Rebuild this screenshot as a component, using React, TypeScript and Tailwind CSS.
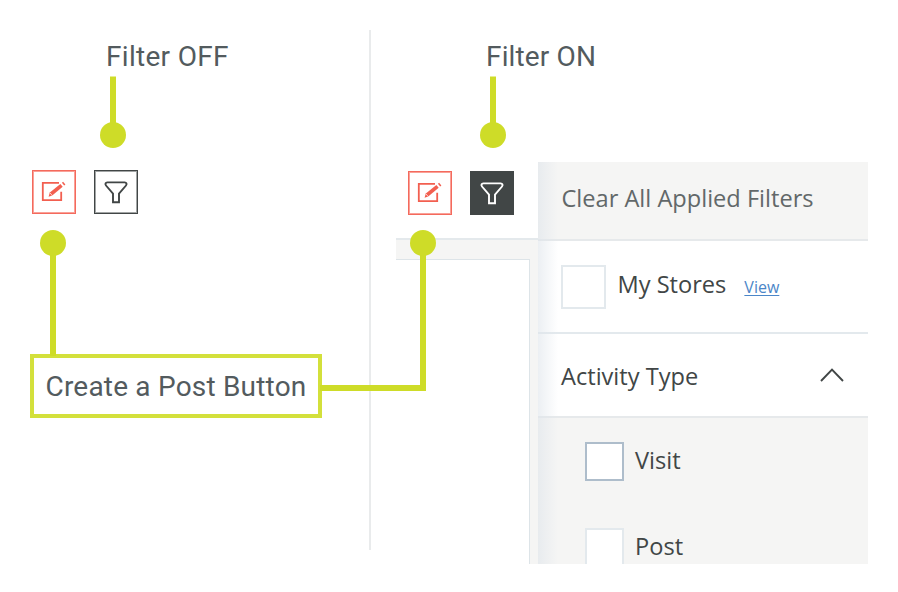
import React from 'react';

function EditButton() {
  return (
    <button className="w-11 h-11 border border-[#f46a5d] shadow-[inset_0_0_0_1px_#f9a198] bg-white flex items-center justify-center">
      <svg viewBox="0 0 44 44" className="w-11 h-11 shrink-0" fill="none">
        <path d="M27 12.8H10.8v17.4h18.4V21.8" stroke="#f25f50" strokeWidth="1.8" />
        <path d="M16.6 26.8l1.2-4.2L28.4 14l2.3 2.8-10.5 8.8z" fill="#f25f50" />
        <path d="M29.9 12.8l2.3 2.8 1.2-1-2.3-2.8z" fill="#f25f50" />
        <path d="M18.1 23l2.1 2.5" stroke="#fff" strokeWidth=".7" />
      </svg>
    </button>
  );
}

function FilterButton({ active = false }: { active?: boolean }) {
  return (
    <button
      className={
        active
          ? 'w-11 h-11 bg-[#414646] text-white flex items-center justify-center'
          : 'w-11 h-11 border border-[#414646] shadow-[inset_0_0_0_1px_#a2a5a5] bg-white text-[#414646] flex items-center justify-center'
      }
    >
      <svg viewBox="0 0 44 44" className="w-11 h-11 shrink-0" fill="none" stroke="currentColor" strokeWidth="1.9">
        <path d="M13.3 12.4h17.4c1.8 0 2.4 1.8 1.3 3.1L25 23.6v8.6h-6v-8.6L12 15.5c-1.1-1.3-.5-3.1 1.3-3.1z" />
      </svg>
    </button>
  );
}

function FilterPanel() {
  return (
    <aside className="relative w-[330px] h-full overflow-hidden bg-[#f5f5f4] font-['Open_Sans',sans-serif] text-[23.6px] text-[#414646]">
      <div className="h-[79px] pl-[23.5px] pb-1 flex items-center border-b-2 border-[#e6e9eb] text-[#626869]">
        <span className="whitespace-nowrap">Clear All Applied Filters</span>
      </div>
      <div className="h-[93px] pl-[23px] flex items-center bg-white border-b-2 border-[#e3e9ed]">
        <span className="w-[45px] h-11 border-2 border-[#e3e9ed] bg-white" />
        <span className="ml-[11.5px] -mt-1">My Stores</span>
        <a className="ml-[18px] text-base text-[#4b86c8] underline underline-offset-2">View</a>
      </div>
      <div className="h-[84px] pl-[23px] pr-6 pt-0.5 flex items-center justify-between bg-white border-b-2 border-[#e6e9eb]">
        <span className="mt-0.5">Activity Type</span>
        <svg viewBox="0 0 24 14" className="w-6 h-3.5 -mt-0.5" fill="none" stroke="#414646" strokeWidth="1.9">
          <path d="M1 13L12 1.5 23 13" />
        </svg>
      </div>
      <div className="pl-[47px] pt-6 flex flex-col gap-[47px]">
        <div className="h-[39px] flex items-center">
          <span className="w-[39px] h-[39px] border-2 border-[#aebdcb] bg-white" />
          <span className="ml-[11px] -mt-0.5">Visit</span>
        </div>
        <div className="h-[39px] flex items-center">
          <span className="w-[39px] h-[39px] border-2 border-[#e3e9ed] bg-white" />
          <span className="ml-[11px] -mt-0.5">Post</span>
        </div>
      </div>
      <div className="absolute inset-y-0 left-0 w-5 bg-gradient-to-r from-[#dfe5eb]/60 to-transparent" />
    </aside>
  );
}

// Connector lines drawn over both halves
function Callouts() {
  return (
    <svg viewBox="0 0 898 592" className="absolute inset-0 w-[898px] h-[592px] pointer-events-none" fill="#cedc28">
      <g stroke="#cedc28" strokeWidth="6" fill="none">
        <path d="M113 76.5V135" />
        <path d="M493 76.5V135" />
        <path d="M53 243V356" />
        <path d="M423 243V388H320" />
      </g>
      <circle cx="113" cy="135" r="13" />
      <circle cx="493" cy="135" r="13" />
      <circle cx="53" cy="243" r="13" />
      <circle cx="423" cy="243" r="13" />
    </svg>
  );
}

export default function App() {
  return (
    <div className="relative w-[898px] h-[592px] overflow-hidden bg-white flex font-['Roboto',sans-serif] text-[#535b5e]">
      <section className="w-[369px] pt-[41px] flex flex-col items-start">
        <h2 className="ml-[106px] h-8 leading-8 text-[28px] tracking-[0.3px] whitespace-nowrap">Filter OFF</h2>
        <div className="mt-[97px] ml-8 flex gap-[18px]">
          <EditButton />
          <FilterButton />
        </div>
        <div className="mt-[140px] ml-[30px] w-[292px] h-16 pt-0.5 border-4 border-[#d3e03b] bg-white flex items-center justify-center">
          <span className="text-[28px] tracking-[0.2px] whitespace-nowrap">Create a Post Button</span>
        </div>
      </section>

      <div className="mt-[30px] w-0.5 h-[520px] bg-[#e9ebec]" />

      <section className="w-[527px] pt-[41px]">
        <h2 className="ml-[115px] h-8 leading-8 text-[28px] tracking-[0.15px] whitespace-nowrap">Filter ON</h2>
        <div className="mt-[89px] ml-[25px] h-[402px] flex">
          <div className="w-[142px] flex flex-col">
            <div className="h-[78px] pt-[9px] pl-3 flex gap-[18px] border-b-2 border-[#e4e9ec]">
              <EditButton />
              <FilterButton active />
            </div>
            <div className="flex-1 pt-[19px] pr-2 bg-[#f5f5f4] flex">
              <div className="flex-1 bg-white border-t border-r border-[#dde4e8]" />
            </div>
          </div>
          <FilterPanel />
        </div>
      </section>
      <Callouts />
    </div>
  );
}
